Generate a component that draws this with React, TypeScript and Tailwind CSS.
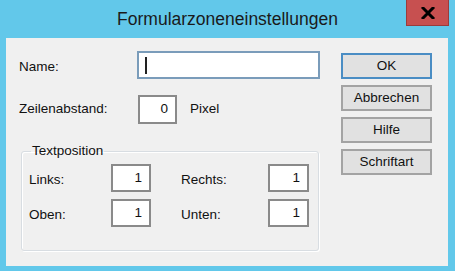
export default function App() {
  const font = { fontFamily: '"Liberation Sans", Arial, sans-serif' };
  return (
    <div className="flex h-[271px] w-[455px] flex-col bg-[#62c8ea] text-[13.5px] text-[#111]" style={font}>
      {/* Title bar */}
      <div className="grid h-[38px] grid-cols-[1fr_auto_1fr]">
        <div />
        <div className="pt-[7px] text-[17.5px] leading-[24px] text-[#1a1a1a]">Formularzoneneinstellungen</div>
        <div className="flex justify-end pr-[6px]">
          <div className="flex h-[26px] w-[43px] items-center justify-center border border-t-0 border-[#9a3c3c] bg-[#c75050]">
            <svg width="14" height="12" viewBox="0 0 14 12">
              <path d="M2 1 L12 11 M12 1 L2 11" stroke="#000" strokeWidth="3" strokeLinecap="square" />
            </svg>
          </div>
        </div>
      </div>

      {/* Client area */}
      <div className="mb-[5px] ml-[6px] mr-[7px] flex flex-1 bg-[#f0f0f0]">
        <div className="ml-[13px] flex w-[313px] flex-col">
          <div className="mt-[13px] flex items-center">
            <span className="w-[118px] pt-[5px]">Name:</span>
            <div className="flex h-[28px] w-[183px] items-center border-2 border-[#7a9cba] bg-white pl-[6px]">
              <div className="h-[17px] w-[2px] bg-[#222]" />
            </div>
          </div>

          <div className="mt-[16px] flex items-center">
            <span className="w-[119px]">Zeilenabstand:</span>
            <div className="flex h-[29px] w-[39px] items-center justify-end border-2 border-[#8a8a8a] bg-white pr-[7px]">0</div>
            <span className="ml-[13px]">Pixel</span>
          </div>

          <fieldset className="mt-[18px] ml-[2px] h-[109px] w-[298px] rounded-[3px] border border-[#d8dde2] shadow-[inset_1px_1px_0_#fff,1px_1px_0_#fff]">
            <legend className="ml-[9px] px-[1px] leading-[18px]">Textposition</legend>
            <div className="mt-[4px] flex flex-col gap-[7px] pl-[7px]">
              <div className="flex items-center">
                <span className="w-[82px] pt-[5px]">Links:</span>
                <div className="flex h-[28px] w-[40px] items-center justify-end border-2 border-[#8a8a8a] bg-white pr-[7px]">1</div>
                <span className="ml-[30px] w-[87px] pt-[5px]">Rechts:</span>
                <div className="flex h-[28px] w-[41px] items-center justify-end border-2 border-[#8a8a8a] bg-white pr-[7px]">1</div>
              </div>
              <div className="flex items-center">
                <span className="w-[82px] pt-[5px]">Oben:</span>
                <div className="flex h-[28px] w-[40px] items-center justify-end border-2 border-[#8a8a8a] bg-white pr-[7px]">1</div>
                <span className="ml-[30px] w-[87px] pt-[5px]">Unten:</span>
                <div className="flex h-[28px] w-[41px] items-center justify-end border-2 border-[#8a8a8a] bg-white pr-[7px]">1</div>
              </div>
            </div>
          </fieldset>
        </div>

        <div className="ml-[9px] mt-[15px] flex w-[91px] flex-col gap-[6px]">
          <button className="h-[26px] border-2 border-[#4a8dc4] bg-[#e1e1e1]">OK</button>
          <button className="h-[26px] border-2 border-[#a3a3a3] bg-[#e1e1e1]">Abbrechen</button>
          <button className="h-[26px] border-2 border-[#a3a3a3] bg-[#e1e1e1]">Hilfe</button>
          <button className="h-[26px] border-2 border-[#a3a3a3] bg-[#e1e1e1]">Schriftart</button>
        </div>
      </div>
    </div>
  );
}
